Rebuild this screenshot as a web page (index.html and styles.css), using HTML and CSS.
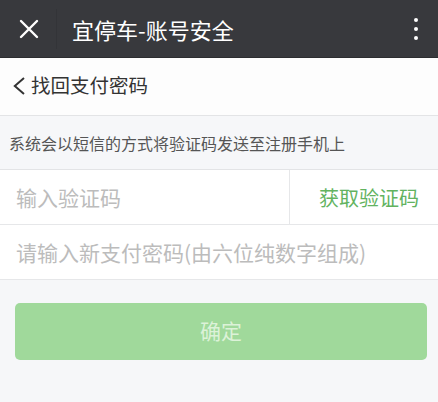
FILE: index.html
```html
<!DOCTYPE html>
<html lang="zh-CN">
<head>
<meta charset="utf-8">
<title>宜停车-账号安全</title>
<link rel="stylesheet" href="styles.css">
</head>
<body>
<div class="page">
  <header class="topbar">
    <div class="close">
      <svg width="20" height="20" viewBox="0 0 20 20"><path d="M2 2 L18 18 M18 2 L2 18" stroke="#fff" stroke-width="2.4" stroke-linecap="round" fill="none"/></svg>
    </div>
    <div class="sep"></div>
    <div class="title">宜停车-账号安全</div>
    <div class="more"><span></span><span></span><span></span></div>
  </header>
  <div class="subbar">
    <svg class="chev" width="12" height="18" viewBox="0 0 12 18"><path d="M11 1 L1.8 9 L11 17" stroke="#333" stroke-width="2" fill="none" stroke-linejoin="miter"/></svg>
    <span class="subtitle">找回支付密码</span>
  </div>
  <div class="info">系统会以短信的方式将验证码发送至注册手机上</div>
  <div class="form">
    <div class="row">
      <div class="field">输入验证码</div>
      <div class="getcode">获取验证码</div>
    </div>
    <div class="row">
      <div class="field">请输入新支付密码(由六位纯数字组成)</div>
    </div>
  </div>
  <div class="actions">
    <div class="btn">确定</div>
  </div>
</div>
</body>
</html>
```
FILE: styles.css
```css
html, body {
  margin: 0;
  padding: 0;
}
body {
  width: 438px;
  height: 402px;
  overflow: hidden;
  background: #f6f7f9;
  font-family: "Noto Sans CJK SC", "Noto Sans", sans-serif;
}
.page {
  display: flex;
  flex-direction: column;
}
.topbar {
  height: 57px;
  background: #38393d;
  display: flex;
  align-items: center;
  border-bottom: 1px solid #2c2d30;
}
.close {
  width: 56px;
  display: flex;
  justify-content: center;
  padding-left: 2px;
  box-sizing: border-box;
}
.close svg { display: block; }
.sep {
  width: 1px;
  height: 40px;
  background: #333438;
}
.title {
  flex: 1;
  color: #fff;
  font-size: 22px;
  padding-left: 15px;
  line-height: 1;
}
.more {
  width: 44px;
  display: flex;
  flex-direction: column;
  align-items: center;
  gap: 5px;
}
.more span {
  width: 4px;
  height: 4px;
  border-radius: 50%;
  background: #fff;
}
.subbar {
  height: 57px;
  background: #fdfdfd;
  display: flex;
  align-items: center;
  padding-left: 13px;
  border-bottom: 1px solid #e3e4e6;
}
.chev { display: block; margin-right: 6px; margin-top: -2px; }
.subtitle {
  font-size: 19.5px;
  color: #333;
  line-height: 1;
  margin-top: -3px;
}
.info {
  height: 53px;
  display: flex;
  align-items: center;
  padding-left: 9px;
  font-size: 16px;
  color: #555;
  border-bottom: 1px solid #e3e4e6;
}
.form {
  background: #fff;
}
.row {
  height: 54px;
  display: flex;
  align-items: center;
  border-bottom: 1px solid #e6e7e9;
}
.field {
  flex: 1;
  height: 100%;
  display: flex;
  align-items: center;
  padding-left: 16px;
  font-size: 21px;
  color: #bcbcbc;
}
.getcode {
  width: 149px;
  height: 100%;
  box-sizing: border-box;
  border-left: 1px solid #e6e7e9;
  display: flex;
  align-items: center;
  justify-content: center;
  padding-left: 10px;
  font-size: 20px;
  color: #62b35f;
}
.actions {
  padding: 23px 11px 0 15px;
}
.btn {
  height: 57px;
  background: #a0d99b;
  border-radius: 5px;
  display: flex;
  align-items: center;
  justify-content: center;
  font-size: 21px;
  color: #dcf2d8;
  padding-bottom: 4px;
  box-sizing: border-box;
}
```
